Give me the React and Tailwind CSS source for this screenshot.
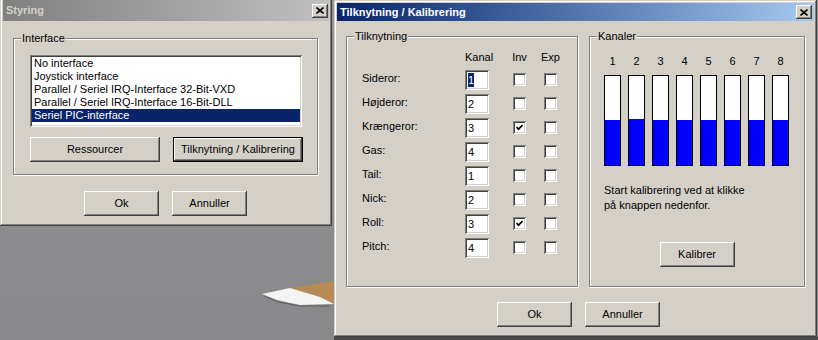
import React from 'react';

const raised =
  'bg-[#d4d0c8] shadow-[inset_-1px_-1px_#404040,inset_1px_1px_#ffffff,inset_-2px_-2px_#808080,inset_2px_2px_#d4d0c8]';
const sunken =
  'bg-white shadow-[inset_1px_1px_#808080,inset_-1px_-1px_#ffffff,inset_2px_2px_#404040,inset_-2px_-2px_#d4d0c8]';
const frame =
  'bg-[#d4d0c8] p-[3px] shadow-[inset_-1px_-1px_#404040,inset_1px_1px_#d4d0c8,inset_-2px_-2px_#808080,inset_2px_2px_#ffffff]';

function Button({ w, isDefault, children }) {
  return (
    <div
      className={`flex h-[25px] items-center justify-center ${raised} ${
        isDefault ? 'outline outline-1 outline-black -outline-offset-1 shadow-[inset_-2px_-2px_#404040,inset_2px_2px_#ffffff,inset_-3px_-3px_#808080]' : ''
      }`}
      style={{ width: w }}
    >
      {children}
    </div>
  );
}

function CloseButton() {
  return (
    <div className={`flex h-[14px] w-[16px] items-center justify-center ${raised}`}>
      <svg width="8" height="7" viewBox="0 0 8 7">
        <path d="M0.5 0.5 L7.5 6.5 M7.5 0.5 L0.5 6.5" stroke="#000" strokeWidth="1.6" />
      </svg>
    </div>
  );
}

function Group({ label, className, children }) {
  return (
    <div className={`border border-[#808080] shadow-[inset_1px_1px_#ffffff,1px_1px_#ffffff] ${className}`}>
      <div className="-mt-[7px] ml-[7px] w-fit bg-[#d4d0c8] px-[1px] leading-[13px]">{label}</div>
      {children}
    </div>
  );
}

function Check({ on }) {
  return (
    <div className={`mt-[3px] flex h-[13px] w-[13px] items-center justify-center ${sunken}`}>
      {on && (
        <svg width="7" height="7" viewBox="0 0 7 7">
          <path d="M0.5 3 L2.5 5.2 L6.5 1" stroke="#000" strokeWidth="1.7" fill="none" />
        </svg>
      )}
    </div>
  );
}

const items = [
  'No interface',
  'Joystick interface',
  'Parallel / Seriel IRQ-Interface 32-Bit-VXD',
  'Parallel / Seriel IRQ-Interface 16-Bit-DLL',
  'Seriel PIC-interface',
];

const rows = [
  ['Sideror:', '1', false],
  ['Højderor:', '2', false],
  ['Krængeror:', '3', true],
  ['Gas:', '4', false],
  ['Tail:', '1', false],
  ['Nick:', '2', false],
  ['Roll:', '3', true],
  ['Pitch:', '4', false],
];

const fills = [45, 46, 45, 45, 45, 45, 45, 45];

export default function App() {
  return (
    <div className="relative h-[340px] w-[818px] overflow-hidden bg-linear-to-b from-[#959597] to-[#88888a] font-['Liberation_Sans',Arial,sans-serif] text-[11px] text-black">
      {/* scene: wing in the background */}
      <svg className="absolute left-0 top-0" width="818" height="340">
        <polygon points="290,288 334,281 334,304 320,297" fill="#b88a55" />
        <polygon points="262,294 290,288 320,297 334,304 300,305 277,300" fill="#f4f4f4" />
        <polyline points="264,296 278,302 300,306 330,306" stroke="#5c5c5e" strokeWidth="1" fill="none" />
        <rect x="334" y="337" width="484" height="3" fill="#4a4a4a" />
      </svg>

      {/* Styring window */}
      <div className={`absolute left-0 top-[-3px] h-[229px] w-[332px] ${frame}`}>
        <div className="flex h-[21px] items-center justify-between bg-linear-to-r from-[#808080] to-[#c0c0c0] pl-[3px] pr-[1px]">
          <span className="font-bold text-[#d4d0c8]">Styring</span>
          <CloseButton />
        </div>
        <Group label="Interface" className="ml-[10px] mt-[17px] h-[137px] w-[305px]">
          <div className="pl-[16px] pt-[10px]">
            <div className={`h-[72px] w-[272px] p-[2px] ${sunken}`}>
              {items.map((t, i) => (
                <div
                  key={t}
                  className={`h-[13px] whitespace-nowrap pl-[2px] leading-[13px] ${
                    i === 4 ? 'bg-[#0a246a] text-white' : ''
                  }`}
                >
                  {t}
                </div>
              ))}
            </div>
            <div className="mt-[10px] flex gap-[13px]">
              <Button w={130}>Ressourcer</Button>
              <Button w={130} isDefault>
                Tilknytning / Kalibrering
              </Button>
            </div>
          </div>
        </Group>
        <div className="mt-[16px] flex justify-center gap-[13px] pr-[1px]">
          <Button w={75}>Ok</Button>
          <Button w={75}>Annuller</Button>
        </div>
      </div>

      {/* Tilknytning / Kalibrering window */}
      <div className={`absolute left-[334px] top-0 h-[337px] w-[483px] ${frame}`}>
        <div className="flex h-[18px] items-center justify-between bg-linear-to-r from-[#0a246a] to-[#a6caf0] pl-[3px] pr-[2px]">
          <span className="font-bold text-white">Tilknytning / Kalibrering</span>
          <CloseButton />
        </div>
        <div className="ml-[9px] mt-[15px] flex gap-[11px]">
          <Group label="Tilknytning" className="h-[251px] w-[232px]">
            <div className="flex pl-[15px] pt-[8px] leading-[13px]">
              <div className="w-[103px]" />
              <div className="w-[24px] whitespace-nowrap">Kanal</div>
              <div className="ml-[24px] flex w-[13px] justify-center">Inv</div>
              <div className="ml-[18px] flex w-[13px] justify-center">Exp</div>
            </div>
            <div className="mt-[6px] pl-[15px]">
              {rows.map(([label, val, inv], i) => (
                <div key={label} className="flex h-[24px]">
                  <div className="w-[103px] pt-[2px] leading-[13px]">{label}</div>
                  <div className={`flex h-[20px] w-[24px] items-center pl-[3px] ${sunken}`}>
                    {i === 0 ? (
                      <span className="bg-[#0a246a] leading-[14px] text-white">{val}</span>
                    ) : (
                      <span className="leading-[14px]">{val}</span>
                    )}
                  </div>
                  <div className="ml-[24px]">
                    <Check on={inv} />
                  </div>
                  <div className="ml-[18px]">
                    <Check on={false} />
                  </div>
                </div>
              ))}
            </div>
          </Group>
          <Group label="Kanaler" className="h-[251px] w-[216px]">
            <div className="pl-[14px] pt-[12px]">
              <div className="flex gap-[7px]">
                {fills.map((_, i) => (
                  <div key={i} className="w-[17px] text-center leading-[13px]">
                    {i + 1}
                  </div>
                ))}
              </div>
              <div className="mt-[7px] flex gap-[7px]">
                {fills.map((f, i) => (
                  <div key={i} className="flex h-[91px] w-[17px] flex-col justify-end border border-black bg-white">
                    <div className="bg-[#0000ff]" style={{ height: f }} />
                  </div>
                ))}
              </div>
              <div className="mt-[17px] leading-[15px]">
                Start kalibrering ved at klikke
                <br />
                på knappen nedenfor.
              </div>
            </div>
            <div className="mt-[29px] flex justify-center">
              <Button w={75}>Kalibrer</Button>
            </div>
          </Group>
        </div>
        <div className="ml-[160px] mt-[15px] flex gap-[13px]">
          <Button w={75}>Ok</Button>
          <Button w={75}>Annuller</Button>
        </div>
      </div>
    </div>
  );
}
